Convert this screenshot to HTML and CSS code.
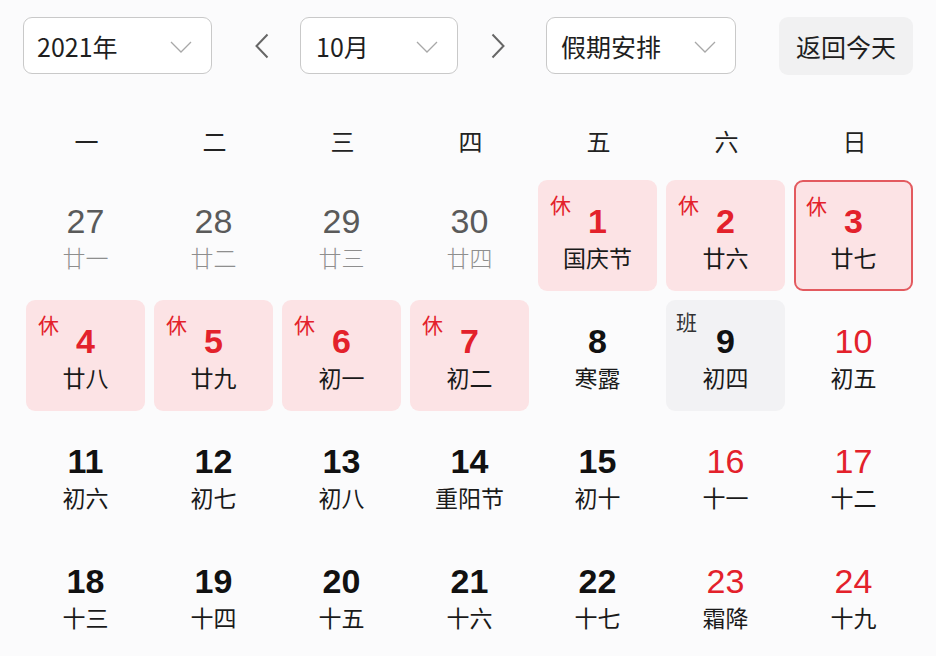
FILE: index.html
```html
<!DOCTYPE html>
<html lang="zh-CN">
<head>
<meta charset="utf-8">
<title>日历</title>
<link rel="stylesheet" href="styles.css">
</head>
<body>
<div class="page">
  <div class="toolbar">
    <div class="select select-year"><span class="select-text">2021年</span><svg class="chev" width="22" height="12" viewBox="0 0 22 12"><polyline points="1,1 11,11 21,1" fill="none" stroke="#a8a8a8" stroke-width="1.3"/></svg></div>
    <div class="arrow arrow-prev"><svg width="14" height="26" viewBox="0 0 14 26"><polyline points="12.5,1.5 1.5,13 12.5,24.5" fill="none" stroke="#666" stroke-width="2"/></svg></div>
    <div class="select select-month"><span class="select-text">10月</span><svg class="chev" width="22" height="12" viewBox="0 0 22 12"><polyline points="1,1 11,11 21,1" fill="none" stroke="#a8a8a8" stroke-width="1.3"/></svg></div>
    <div class="arrow arrow-next"><svg width="14" height="26" viewBox="0 0 14 26"><polyline points="1.5,1.5 12.5,13 1.5,24.5" fill="none" stroke="#666" stroke-width="2"/></svg></div>
    <div class="select select-holiday"><span class="select-text">假期安排</span><svg class="chev" width="22" height="12" viewBox="0 0 22 12"><polyline points="1,1 11,11 21,1" fill="none" stroke="#a8a8a8" stroke-width="1.3"/></svg></div>
    <div class="today-btn">返回今天</div>
  </div>

  <div class="weekdays">
    <div>一</div><div>二</div><div>三</div><div>四</div><div>五</div><div>六</div><div>日</div>
  </div>

  <div class="grid">
    <div class="cell other"><div class="num">27</div><div class="lunar">廿一</div></div>
    <div class="cell other"><div class="num">28</div><div class="lunar">廿二</div></div>
    <div class="cell other"><div class="num">29</div><div class="lunar">廿三</div></div>
    <div class="cell other"><div class="num">30</div><div class="lunar">廿四</div></div>
    <div class="cell rest"><span class="tag">休</span><div class="num">1</div><div class="lunar">国庆节</div></div>
    <div class="cell rest"><span class="tag">休</span><div class="num">2</div><div class="lunar">廿六</div></div>
    <div class="cell rest selected"><span class="tag">休</span><div class="num">3</div><div class="lunar">廿七</div></div>

    <div class="cell rest"><span class="tag">休</span><div class="num">4</div><div class="lunar">廿八</div></div>
    <div class="cell rest"><span class="tag">休</span><div class="num">5</div><div class="lunar">廿九</div></div>
    <div class="cell rest"><span class="tag">休</span><div class="num">6</div><div class="lunar">初一</div></div>
    <div class="cell rest"><span class="tag">休</span><div class="num">7</div><div class="lunar">初二</div></div>
    <div class="cell"><div class="num">8</div><div class="lunar">寒露</div></div>
    <div class="cell work"><span class="tag">班</span><div class="num">9</div><div class="lunar">初四</div></div>
    <div class="cell weekend"><div class="num">10</div><div class="lunar">初五</div></div>

    <div class="cell"><div class="num">11</div><div class="lunar">初六</div></div>
    <div class="cell"><div class="num">12</div><div class="lunar">初七</div></div>
    <div class="cell"><div class="num">13</div><div class="lunar">初八</div></div>
    <div class="cell"><div class="num">14</div><div class="lunar">重阳节</div></div>
    <div class="cell"><div class="num">15</div><div class="lunar">初十</div></div>
    <div class="cell weekend"><div class="num">16</div><div class="lunar">十一</div></div>
    <div class="cell weekend"><div class="num">17</div><div class="lunar">十二</div></div>

    <div class="cell"><div class="num">18</div><div class="lunar">十三</div></div>
    <div class="cell"><div class="num">19</div><div class="lunar">十四</div></div>
    <div class="cell"><div class="num">20</div><div class="lunar">十五</div></div>
    <div class="cell"><div class="num">21</div><div class="lunar">十六</div></div>
    <div class="cell"><div class="num">22</div><div class="lunar">十七</div></div>
    <div class="cell weekend"><div class="num">23</div><div class="lunar">霜降</div></div>
    <div class="cell weekend"><div class="num">24</div><div class="lunar">十九</div></div>
  </div>
</div>
</body>
</html>
```

FILE: styles.css
```css
html, body {
  margin: 0;
  padding: 0;
  background: #fbfbfc;
}

body {
  font-family: "Noto Sans CJK SC", "Noto Sans", sans-serif;
  color: #1a1a1a;
  width: 936px;
  height: 656px;
  overflow: hidden;
}

.page {
  padding: 17px 0 0 0;
}

.toolbar {
  display: flex;
  align-items: center;
  padding-left: 23px;
  height: 57px;
}

.select {
  box-sizing: border-box;
  height: 57px;
  background: #ffffff;
  border: 1px solid #c9c9c9;
  border-radius: 9px;
  display: flex;
  align-items: center;
  justify-content: space-between;
  padding: 0 19px 0 13px;
}

.select-year { width: 189px; }
.select-month { width: 158px; padding-left: 15px; }
.select-holiday { width: 190px; padding-left: 14px; }

.select-text {
  font-size: 25px;
  line-height: 30px;
  color: #1f1f1f;
}

.chev {
  display: block;
  margin-top: 2px;
}

.arrow {
  width: 88px;
  display: flex;
  align-items: center;
}

.arrow-prev {
  justify-content: flex-start;
  padding-left: 43px;
  box-sizing: border-box;
}

.arrow-next {
  justify-content: flex-start;
  padding-left: 33px;
  box-sizing: border-box;
}

.arrow svg { display: block; }

.today-btn {
  margin-left: 43px;
  box-sizing: border-box;
  width: 134px;
  height: 58px;
  border-radius: 9px;
  background: #f1f1f2;
  display: flex;
  align-items: center;
  justify-content: center;
  font-size: 25px;
  color: #1f1f1f;
}

.weekdays {
  display: grid;
  grid-template-columns: repeat(7, 119px);
  column-gap: 9px;
  padding-left: 27px;
  margin-top: 49px;
  height: 36px;
  align-items: center;
}

.weekdays div {
  text-align: center;
  font-size: 24px;
  line-height: 36px;
  color: #222;
}

.grid {
  display: grid;
  grid-template-columns: repeat(7, 119px);
  grid-auto-rows: 111px;
  gap: 9px;
  padding-left: 26px;
  margin-top: 21px;
}

.cell {
  position: relative;
  box-sizing: border-box;
  border-radius: 9px;
  text-align: center;
  padding-top: 23px;
}

.num {
  font-family: "Liberation Sans", Arial, sans-serif;
  font-size: 34px;
  line-height: 36px;
  font-weight: 700;
  color: #111;
}

.lunar {
  margin-top: 3px;
  font-size: 23px;
  line-height: 30px;
  color: #1a1a1a;
}

.other .num {
  font-weight: 400;
  color: #5a5a5a;
}

.other .lunar {
  color: #8e8e8e;
  font-weight: 300;
}

.weekend .num {
  font-weight: 400;
  color: #e3212b;
}

.rest {
  background: #fce3e5;
}

.rest .num {
  color: #e3212b;
}

.selected {
  border: 2px solid #e35a5f;
  padding-top: 21px;
}

.selected .tag {
  top: 12px;
  left: 10px;
}

.work {
  background: #f2f2f4;
}

.tag {
  position: absolute;
  top: 13px;
  left: 12px;
  font-size: 21px;
  line-height: 22px;
  color: #e3212b;
}

.work .tag {
  color: #333;
  top: 10px;
  left: 10px;
}
```
